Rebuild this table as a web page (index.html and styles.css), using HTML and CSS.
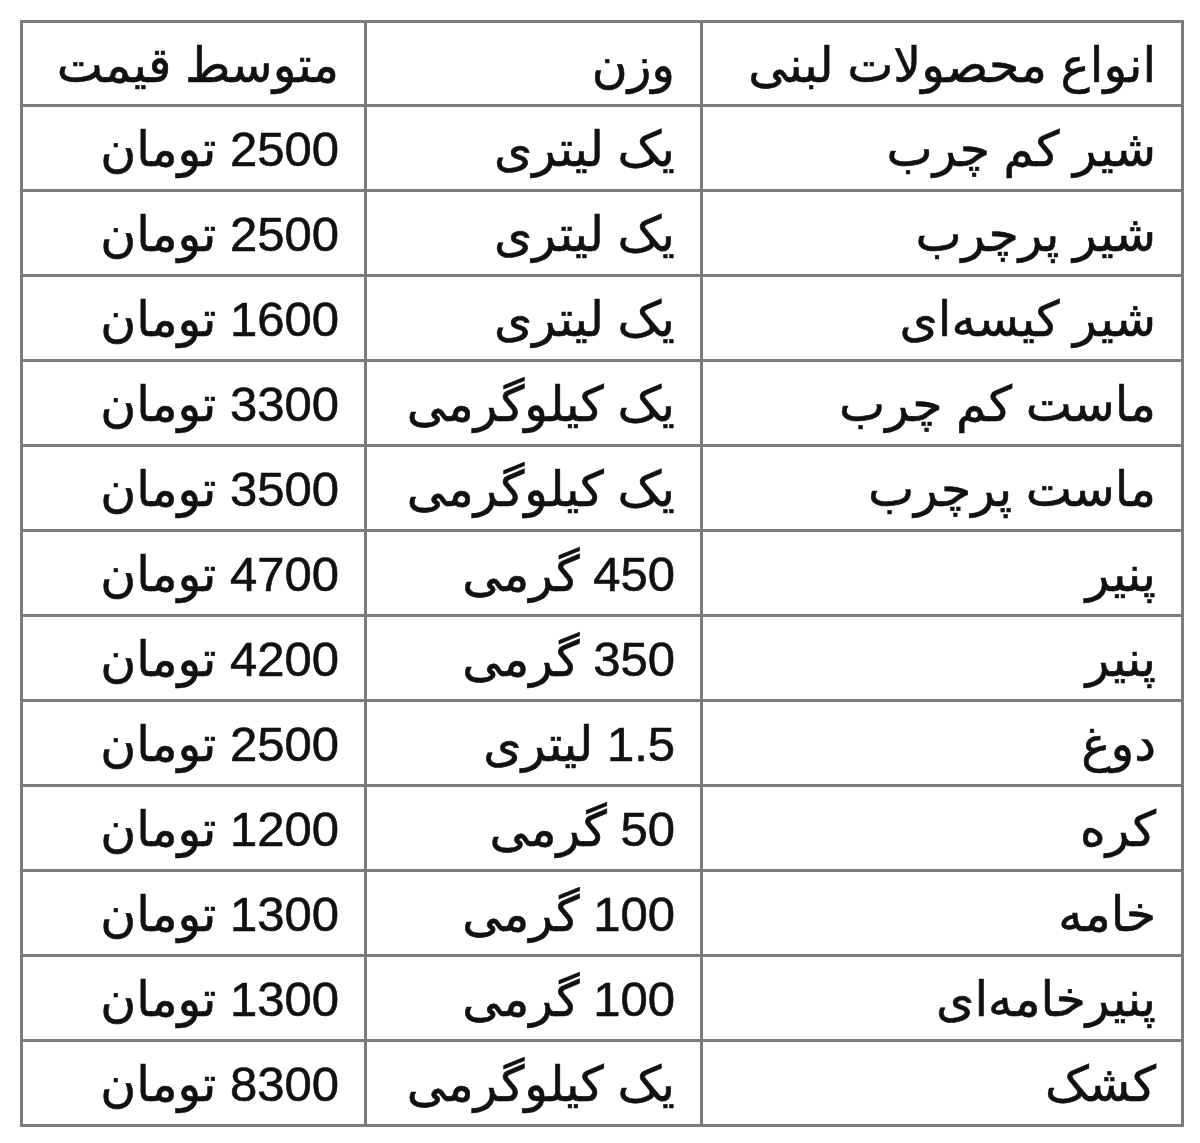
FILE: index.html
```html
<!DOCTYPE html>
<html lang="fa" dir="rtl">
<head>
<meta charset="utf-8">
<title>قیمت محصولات لبنی</title>
<link rel="stylesheet" href="styles.css">
</head>
<body>
<div class="table">
  <div class="cell head">انواع محصولات لبنی</div>
  <div class="cell head">وزن</div>
  <div class="cell head">متوسط قیمت</div>

  <div class="cell">شیر کم چرب</div>
  <div class="cell">یک لیتری</div>
  <div class="cell">2500 تومان</div>

  <div class="cell">شیر پرچرب</div>
  <div class="cell">یک لیتری</div>
  <div class="cell">2500 تومان</div>

  <div class="cell">شیر کیسه&zwnj;ای</div>
  <div class="cell">یک لیتری</div>
  <div class="cell">1600 تومان</div>

  <div class="cell">ماست کم چرب</div>
  <div class="cell">یک کیلوگرمی</div>
  <div class="cell">3300 تومان</div>

  <div class="cell">ماست پرچرب</div>
  <div class="cell">یک کیلوگرمی</div>
  <div class="cell">3500 تومان</div>

  <div class="cell">پنیر</div>
  <div class="cell">450 گرمی</div>
  <div class="cell">4700 تومان</div>

  <div class="cell">پنیر</div>
  <div class="cell">350 گرمی</div>
  <div class="cell">4200 تومان</div>

  <div class="cell">دوغ</div>
  <div class="cell">1.5 لیتری</div>
  <div class="cell">2500 تومان</div>

  <div class="cell">کره</div>
  <div class="cell">50 گرمی</div>
  <div class="cell">1200 تومان</div>

  <div class="cell">خامه</div>
  <div class="cell">100 گرمی</div>
  <div class="cell">1300 تومان</div>

  <div class="cell">پنیرخامه&zwnj;ای</div>
  <div class="cell">100 گرمی</div>
  <div class="cell">1300 تومان</div>

  <div class="cell">کشک</div>
  <div class="cell">یک کیلوگرمی</div>
  <div class="cell">8300 تومان</div>
</div>
</body>
</html>
```
FILE: styles.css
```css
html, body {
  margin: 0;
  padding: 0;
  background: #ffffff;
}
body {
  direction: rtl;
  font-family: "Liberation Sans", "DejaVu Sans", sans-serif;
  color: #111111;
}
.table {
  margin: 20px auto 0 20px;
  display: grid;
  grid-template-columns: 481px 336px 344px;
  grid-template-rows: 84px;
  grid-auto-rows: 85px;
  width: max-content;
  border-right: 3px solid #7c7c7c;
  border-bottom: 3px solid #7c7c7c;
}
.cell {
  box-sizing: border-box;
  border-top: 3px solid #7c7c7c;
  border-left: 3px solid #7c7c7c;
  padding: 3px 25px 0 10px;
  display: flex;
  align-items: center;
  justify-content: flex-start;
  font-size: 49px;
  line-height: 1;
  white-space: nowrap;
  -webkit-text-stroke: 0.6px #111111;
}
```
